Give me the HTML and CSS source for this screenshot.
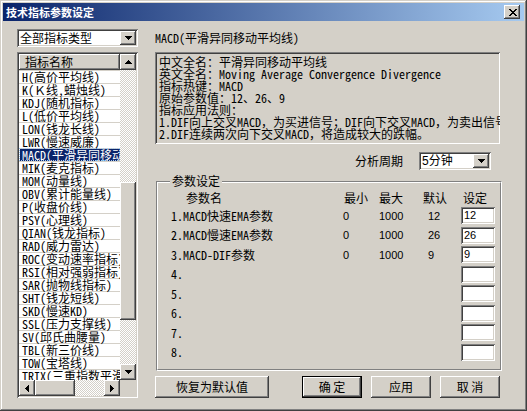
FILE: index.html
```html
<!DOCTYPE html>
<html lang="zh-CN">
<head>
<meta charset="utf-8">
<title>技术指标参数设定</title>
<link rel="stylesheet" href="styles.css">
</head>
<body>
<div class="window">
  <div class="titlebar">
    <span class="title">技术指标参数设定</span>
    <span class="close raised"><svg width="8" height="7" viewBox="0 0 8 7"><path d="M0 0h2v1H0zM6 0h2v1H6zM1 1h2v1H1zM5 1h2v1H5zM2 2h4v1H2zM3 3h2v1H3zM2 4h4v1H2zM1 5h2v1H1zM5 5h2v1H5zM0 6h2v1H0zM6 6h2v1H6z"/></svg></span>
  </div>
  <div class="client">
    <div class="left">
      <div class="combo type-combo">
        <span class="combo-text">全部指标类型</span>
        <span class="drop raised"><svg width="7" height="4" viewBox="0 0 7 4"><path d="M0 0h7v1H0zM1 1h5v1H1zM2 2h3v1H2zM3 3h1v1H3z"/></svg></span>
      </div>
      <div class="list">
        <div class="list-view">
          <div class="list-header raised">指标名称</div>
          <ul class="items">
            <li>H(高价平均线)</li>
            <li>K(Ｋ线,蜡烛线)</li>
            <li>KDJ(随机指标)</li>
            <li>L(低价平均线)</li>
            <li>LON(钱龙长线)</li>
            <li>LWR(慢速威廉)</li>
            <li class="selected">MACD(平滑异同移动平均线)</li>
            <li>MIK(麦克指标)</li>
            <li>MOM(动量线)</li>
            <li>OBV(累计能量线)</li>
            <li>P(收盘价线)</li>
            <li>PSY(心理线)</li>
            <li>QIAN(钱龙指标)</li>
            <li>RAD(威力雷达)</li>
            <li>ROC(变动速率指标)</li>
            <li>RSI(相对强弱指标)</li>
            <li>SAR(抛物线指标)</li>
            <li>SHT(钱龙短线)</li>
            <li>SKD(慢速KD)</li>
            <li>SSL(压力支撑线)</li>
            <li>SV(邱氏曲腰量)</li>
            <li>TBL(新三价线)</li>
            <li>TOW(宝塔线)</li>
            <li>TRIX(三重指数平滑移动平均)</li>
          </ul>
        </div>
        <div class="vscroll">
          <span class="sbtn raised"><svg width="7" height="4" viewBox="0 0 7 4"><path d="M3 0h1v1H3zM2 1h3v1H2zM1 2h5v1H1zM0 3h7v1H0z"/></svg></span>
          <span class="track track-top"></span>
          <span class="vthumb raised"></span>
          <span class="track track-bottom"></span>
          <span class="sbtn raised"><svg width="7" height="4" viewBox="0 0 7 4"><path d="M0 0h7v1H0zM1 1h5v1H1zM2 2h3v1H2zM3 3h1v1H3z"/></svg></span>
        </div>
        <div class="hscroll">
          <span class="sbtn raised"><svg width="4" height="7" viewBox="0 0 4 7"><path d="M3 0h1v7H3zM2 1h1v5H2zM1 2h1v3H1zM0 3h1v1H0z"/></svg></span>
          <span class="hthumb raised"></span>
          <span class="track track-h"></span>
          <span class="sbtn raised"><svg width="4" height="7" viewBox="0 0 4 7"><path d="M0 0h1v7H0zM1 1h1v5H1zM2 2h1v3H2zM3 3h1v1H3z"/></svg></span>
        </div>
        <div class="corner"></div>
      </div>
    </div>

    <div class="right">
      <div class="ind-name">MACD(平滑异同移动平均线)</div>
      <div class="info">
        <div class="line">中文全名：平滑异同移动平均线</div>
        <div class="line">英文全名：Moving Average Convergence Divergence</div>
        <div class="line">指标热键：MACD</div>
        <div class="line">原始参数值：12、26、9</div>
        <div class="line">指标应用法则：</div>
        <div class="line">1.DIF向上交叉MACD，为买进信号；DIF向下交叉MACD，为卖出信号。</div>
        <div class="line">2.DIF连续两次向下交叉MACD，将造成较大的跌幅。</div>
      </div>
      <div class="period">
        <span class="period-label">分析周期</span>
        <div class="combo period-combo">
          <span class="combo-text sans">5分钟</span>
          <span class="drop raised"><svg width="7" height="4" viewBox="0 0 7 4"><path d="M0 0h7v1H0zM1 1h5v1H1zM2 2h3v1H2zM3 3h1v1H3z"/></svg></span>
        </div>
      </div>
      <div class="group">
        <span class="legend">参数设定</span>
        <div class="params">
          <span class="hd hd-name">参数名</span>
          <span class="hd hd-min">最小</span>
          <span class="hd">最大</span>
          <span class="hd">默认</span>
          <span class="hd hd-set">设定</span>

          <span class="pname">1.MACD快速EMA参数</span>
          <span class="num">0</span><span class="num">1000</span><span class="num def">12</span>
          <span class="field">12</span>

          <span class="pname">2.MACD慢速EMA参数</span>
          <span class="num">0</span><span class="num">1000</span><span class="num def">26</span>
          <span class="field">26</span>

          <span class="pname">3.MACD-DIF参数</span>
          <span class="num">0</span><span class="num">1000</span><span class="num def">9</span>
          <span class="field">9</span>

          <span class="pname">4.</span><span></span><span></span><span></span><span class="field"></span>
          <span class="pname">5.</span><span></span><span></span><span></span><span class="field"></span>
          <span class="pname">6.</span><span></span><span></span><span></span><span class="field"></span>
          <span class="pname">7.</span><span></span><span></span><span></span><span class="field"></span>
          <span class="pname">8.</span><span></span><span></span><span></span><span class="field"></span>
        </div>
      </div>
      <div class="buttons">
        <span class="button raised reset">恢复为默认值</span>
        <span class="button raised default ok">确 定</span>
        <span class="button raised">应用</span>
        <span class="button raised">取 消</span>
      </div>
    </div>
  </div>
</div>
</body>
</html>
```

FILE: styles.css
```css
* {
  box-sizing: border-box;
}

html,
body {
  margin: 0;
  padding: 0;
}

body {
  width: 527px;
  height: 411px;
  overflow: hidden;
  background: #d4d0c8;
  color: #000;
  font-family: "Noto Sans Mono CJK SC", "Noto Sans CJK SC", sans-serif;
  font-size: 12px;
  line-height: 12px;
}

.raised {
  background: #d4d0c8;
  box-shadow: inset -1px -1px #404040, inset 1px 1px #ffffff,
    inset -2px -2px #808080, inset 2px 2px #d4d0c8;
}

.window {
  width: 527px;
  height: 411px;
  padding: 3px;
  display: flex;
  flex-direction: column;
  background: #d4d0c8;
  box-shadow: inset -1px -1px #404040, inset 1px 1px #d4d0c8,
    inset -2px -2px #808080, inset 2px 2px #ffffff;
}

/* title bar */
.titlebar {
  height: 18px;
  flex: none;
  display: flex;
  align-items: center;
  justify-content: space-between;
  padding-left: 3px;
  background: linear-gradient(to right, #0a246a, #a6caf0);
}

.title {
  color: #fff;
  font-family: "Noto Sans CJK SC", sans-serif;
  font-weight: bold;
  font-size: 11px;
  line-height: 12px;
}

.close {
  width: 16px;
  height: 14px;
  margin-right: 4px;
  display: flex;
  align-items: center;
  justify-content: center;
  padding-left: 1px;
}

svg {
  display: block;
  shape-rendering: crispEdges;
  fill: #000;
}

/* client */
.client {
  display: flex;
  padding-left: 14px;
  gap: 17px;
}

.left {
  width: 121px;
  display: flex;
  flex-direction: column;
}

.right {
  width: 347px;
  display: flex;
  flex-direction: column;
}

/* combo boxes */
.combo {
  height: 18px;
  display: flex;
  align-items: center;
  justify-content: space-between;
  padding: 2px;
  background: #fff;
  box-shadow: inset 1px 1px #808080, inset -1px -1px #ffffff,
    inset 2px 2px #404040, inset -2px -2px #d4d0c8;
}

.combo-text {
  padding-left: 1px;
  line-height: 14px;
  white-space: nowrap;
}

.sans {
  font-family: "Liberation Sans", "Noto Sans CJK SC", sans-serif;
}

.drop {
  width: 16px;
  height: 14px;
  display: flex;
  align-items: center;
  justify-content: center;
}

.type-combo {
  margin-top: 8px;
}

/* list */
.list {
  margin-top: 5px;
  height: 346px;
  padding: 2px;
  display: grid;
  grid-template-columns: 101px 16px;
  grid-template-rows: 326px 16px;
  background: #fff;
  box-shadow: inset 1px 1px #808080, inset -1px -1px #ffffff,
    inset 2px 2px #404040, inset -2px -2px #d4d0c8;
}

.list-view {
  overflow: hidden;
  background: #fff;
}

.list-header {
  height: 16px;
  padding-left: 6px;
  line-height: 16px;
  white-space: nowrap;
}

.items {
  list-style: none;
  margin: 0;
  padding: 0;
}

.items li {
  height: 13px;
  border-top: 1px solid #d4d0c8;
  padding-left: 3px;
  line-height: 12px;
  white-space: nowrap;
}

.items li.selected {
  background: #0a246a;
  background-clip: content-box;
  color: #fff;
  padding-left: 1px;
  text-indent: 2px;
  outline: 1px dotted #a6caf0;
  outline-offset: -1px;
}

.vscroll {
  display: flex;
  flex-direction: column;
}

.hscroll {
  display: flex;
}

.sbtn {
  width: 16px;
  height: 16px;
  flex: none;
  display: flex;
  align-items: center;
  justify-content: center;
}

.track {
  background: repeating-conic-gradient(#d4d0c8 0% 25%, #ffffff 0% 50%) 0 0 / 2px 2px;
}

.track-top {
  height: 112px;
}

.vthumb {
  height: 138px;
}

.track-bottom {
  height: 44px;
}

.hthumb {
  width: 40px;
}

.track-h {
  width: 29px;
}

.corner {
  background: #d4d0c8;
}

/* right side */
.ind-name {
  margin-top: 11px;
  height: 12px;
  white-space: nowrap;
}

.info {
  margin-top: 8px;
  width: 345px;
  height: 92px;
  padding: 4px 4px 0 4px;
  overflow: hidden;
  background: #d4d0c8;
  box-shadow: inset 1px 1px #808080, inset -1px -1px #ffffff,
    inset 2px 2px #404040, inset -2px -2px #d4d0c8;
}

.line {
  height: 12px;
  white-space: nowrap;
}

.period {
  margin-top: 8px;
  width: 345px;
  height: 18px;
  display: flex;
  align-items: center;
  justify-content: flex-end;
  padding-right: 9px;
  gap: 16px;
}

.period-label {
  font-family: "Noto Sans CJK SC", sans-serif;
}

.period-combo {
  width: 72px;
}

/* group box */
.group {
  position: relative;
  margin-top: 11px;
  margin-left: 1px;
  width: 346px;
  height: 190px;
  border-style: solid;
  border-width: 1px;
  border-color: #808080 #ffffff #ffffff #808080;
}

.params {
  height: 100%;
  border-style: solid;
  border-width: 1px;
  border-color: #ffffff #808080 #808080 #ffffff;
  padding-top: 6px;
  display: grid;
  grid-template-columns: 185px 36px 44px 38px 34px;
  grid-template-rows: 17px repeat(8, 19.5px);
  align-items: center;
}

.legend {
  position: absolute;
  top: -7px;
  left: 13px;
  padding: 0 2px;
  background: #d4d0c8;
  font-family: "Noto Sans CJK SC", sans-serif;
}

.hd {
  font-family: "Noto Sans CJK SC", sans-serif;
  white-space: nowrap;
}

.hd-name {
  padding-left: 28px;
}

.hd-min {
  padding-left: 1px;
}

.hd-set {
  padding-left: 2px;
}

.pname {
  padding-left: 13px;
  white-space: nowrap;
}

.num {
  font-family: "Liberation Sans", sans-serif;
  font-size: 11px;
}

.num.def {
  padding-left: 5px;
}

.field {
  width: 34px;
  height: 17px;
  padding: 2px 0 0 3px;
  font-family: "Liberation Sans", sans-serif;
  font-size: 11px;
  line-height: 13px;
  background: #fff;
  box-shadow: inset 1px 1px #808080, inset -1px -1px #ffffff,
    inset 2px 2px #404040, inset -2px -2px #d4d0c8;
}

/* buttons */
.buttons {
  margin-top: 5px;
  width: 345px;
  height: 22px;
  display: flex;
  gap: 9px;
}

.button {
  width: 60px;
  height: 22px;
  display: flex;
  align-items: center;
  justify-content: center;
  font-family: "Noto Sans CJK SC", sans-serif;
  white-space: pre;
}

.reset {
  width: 114px;
}

.ok {
  margin-left: auto;
}

.default {
  border: 1px solid #000;
}
```
